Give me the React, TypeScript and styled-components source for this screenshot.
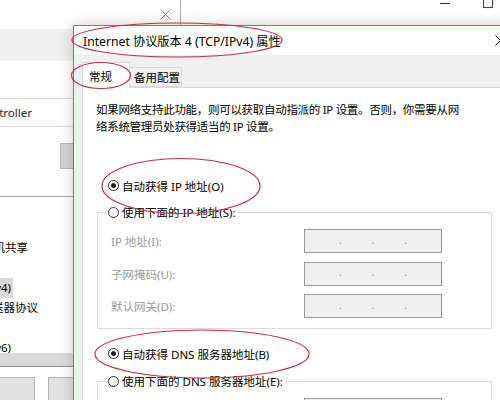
import React from 'react';
import styled, { createGlobalStyle } from 'styled-components';

const GlobalStyle = createGlobalStyle`
  *, *::before, *::after { box-sizing: border-box; }
  html, body { margin: 0; padding: 0; background: #fff; }
  body {
    font-family: "Noto Sans", "Noto Sans CJK SC", sans-serif;
    font-size: 11.5px;
    color: #000;
  }
`;

const Desktop = styled.div`
  position: relative;
  width: 500px;
  height: 400px;
  overflow: hidden;
  background: #fff;
`;

/* window chrome shared bits */

const CaptionButton = styled.div<{ $w: number }>`
  width: ${p => p.$w}px;
  height: 100%;
  display: flex;
  align-items: center;
  justify-content: center;
  flex: none;
`;

const CloseGlyph = ({ color = '#000' }: { color?: string }) => (
  <svg width="11" height="11" viewBox="0 0 11 11">
    <path d="M0.5 0.5 L10.5 10.5 M10.5 0.5 L0.5 10.5" stroke={color} strokeWidth="1" fill="none" />
  </svg>
);

const MinGlyph = () => (
  <svg width="11" height="11" viewBox="0 0 11 11">
    <path d="M0 5.5 H10" stroke="#444" strokeWidth="1.2" />
  </svg>
);

const MaxGlyph = () => (
  <svg width="11" height="11" viewBox="0 0 11 11">
    <rect x="0.5" y="0.5" width="9" height="9" stroke="#444" strokeWidth="1.1" fill="none" />
  </svg>
);

/* network connections window in the back */

const ShellWindow = styled.div`
  position: absolute;
  left: 170px;
  top: -11px;
  width: 383px;
  height: 36px;
  background: #fff;
  z-index: 0;
`;

const ShellBar = styled.div`
  height: 28px;
  display: flex;
  justify-content: flex-end;
`;

/* ethernet properties dialog, mostly covered */

const PropsDialog = styled.div`
  position: absolute;
  left: -1px;
  top: -1px;
  width: 182px;
  height: 440px;
  border: 1px solid #ababab;
  background: #f0f0f0;
  display: flex;
  flex-direction: column;
  z-index: 1;
`;

const PropsTitle = styled.div`
  flex: none;
  height: 29px;
  background: #fff;
  display: flex;
  justify-content: flex-end;
`;

const PropsTabStrip = styled.div`
  flex: none;
  height: 32px;
  background: #f0f0f0;
`;

const PropsPanel = styled.div`
  flex: 1;
  background: #fff;
  display: flex;
  flex-direction: column;
`;

const AdapterBox = styled.div`
  flex: none;
  margin-top: 37px;
  height: 29px;
  border-top: 1px solid #dadada;
  border-bottom: 1px solid #dadada;
  display: flex;
  align-items: center;
  color: #2b2230;
`;

const TrackEnd = styled.div<{ $end: number }>`
  width: ${p => Math.max(p.$end, 0)}px;
  display: flex;
  justify-content: flex-end;
  white-space: nowrap;
  flex: none;
`;

const ConfigRow = styled.div`
  flex: none;
  margin-top: 16px;
  height: 26px;
  padding-left: 60px;
  display: flex;
`;

const GrayButton = styled.div<{ $w: number; $shade?: string }>`
  width: ${p => p.$w}px;
  height: 100%;
  background: ${p => p.$shade ?? '#e1e1e1'};
  border: 1px solid #b4b4b4;
  flex: none;
`;

const ItemList = styled.div`
  flex: none;
  margin-top: 27px;
  border-top: 1px solid #a3a3a3;
  border-bottom: 1px solid #8f8f8f;
  display: flex;
  flex-direction: column;
`;

const ItemViewport = styled.div`
  height: 156px;
  padding-top: 1px;
  overflow: hidden;
`;

const ItemRow = styled.div`
  height: 20px;
  display: flex;
  align-items: center;
`;

const ItemLabel = styled.span<{ $selected?: boolean }>`
  padding: 0 2px;
  line-height: 20px;
  background: ${p => (p.$selected ? '#d9d9d9' : 'transparent')};
`;

const HScroll = styled.div`
  height: 13px;
  background: #dadada;
`;

const ActionRow = styled.div`
  flex: none;
  margin-top: 10px;
  height: 24px;
  display: flex;
  gap: 13px;
  margin-left: -40px;
`;

/* TCP/IPv4 properties dialog */

const Dialog = styled.div`
  position: absolute;
  left: 73px;
  top: 25px;
  width: 451px;
  height: 470px;
  border: 1px solid #3d8bd8;
  background: #f0f0f0;
  box-shadow: 0 0 14px rgba(0, 0, 0, 0.2);
  display: flex;
  flex-direction: column;
  z-index: 2;
`;

const TitleBar = styled.div`
  flex: none;
  height: 29px;
  background: #fff;
  display: flex;
  align-items: center;
  padding-left: 9px;
  font-size: 12.2px;
`;

const TitleText = styled.span`
  flex: 1;
  white-space: nowrap;
`;

const Body = styled.div`
  flex: 1;
  padding: 7px 0 0 8px;
  display: flex;
  flex-direction: column;
`;

const TabRow = styled.div`
  flex: none;
  display: flex;
  align-items: flex-end;
  position: relative;
  z-index: 1;
`;

const Tab = styled.div<{ $active?: boolean; $w: number }>`
  width: ${p => p.$w}px;
  height: ${p => (p.$active ? 26 : 20)}px;
  margin-bottom: ${p => (p.$active ? -1 : 0)}px;
  padding-left: ${p => (p.$active ? 6 : 4)}px;
  background: ${p => (p.$active ? '#fff' : '#f0f0f0')};
  border: 1px solid #d9d9d9;
  border-bottom: ${p => (p.$active ? 'none' : '1px solid #d9d9d9')};
  border-left: ${p => (p.$active ? '1px solid #d9d9d9' : 'none')};
  display: flex;
  align-items: center;
  white-space: nowrap;
`;

const Panel = styled.div`
  flex: 1;
  background: #fff;
  border: 1px solid #d9d9d9;
  padding: 13px 0 0 13px;
  display: flex;
  flex-direction: column;
`;

const Description = styled.p`
  flex: none;
  margin: 0;
  line-height: 17px;
  letter-spacing: -0.3px;
  white-space: nowrap;
`;

const RadioRow = styled.div<{ $gap: number }>`
  flex: none;
  margin-top: ${p => p.$gap}px;
  padding-left: 12px;
  height: 17px;
  display: flex;
`;

const RadioLabel = styled.label`
  display: flex;
  align-items: center;
  gap: 3px;
  white-space: nowrap;
  height: 17px;
`;

const RadioDot = styled.span<{ $checked?: boolean }>`
  width: 11px;
  height: 11px;
  border: 1px solid #333;
  border-radius: 50%;
  background: #fff;
  display: flex;
  align-items: center;
  justify-content: center;
  flex: none;

  &::after {
    content: '';
    width: 5px;
    height: 5px;
    border-radius: 50%;
    background: #222;
    display: ${p => (p.$checked ? 'block' : 'none')};
  }
`;

const GroupBox = styled.fieldset<{ $gap: number }>`
  flex: none;
  margin: ${p => p.$gap}px 0 0 1px;
  width: 395px;
  min-width: 0;
  border: 1px solid #dcdcdc;
  padding: 0 0 9.5px 0;
`;

const GroupLegend = styled.legend`
  margin-left: 10px;
  padding: 0 3px 0 0;
  height: 17px;
`;

const FieldGrid = styled.div`
  padding: 8.5px 0 0 13px;
  display: grid;
  grid-template-columns: 193px 138px;
  row-gap: 8.5px;
  align-items: center;
`;

const FieldLabel = styled.span`
  color: #9b9b9b;
  white-space: nowrap;
`;

const AddressBox = styled.div`
  height: 24px;
  background: #f0f0f0;
  border: 1px solid #9a9a9a;
  padding: 0 4px 3px 4px;
  display: flex;
  justify-content: space-evenly;
  align-items: center;
  color: #8a8a8a;
  font-size: 10px;
`;

const Markup = styled.svg`
  position: absolute;
  left: 0;
  top: 0;
  pointer-events: none;
  z-index: 3;
`;

const Radio = ({ checked, children }: { checked?: boolean; children: React.ReactNode }) => (
  <RadioLabel>
    <RadioDot $checked={checked} />
    <span>{children}</span>
  </RadioLabel>
);

const Address = () => (
  <AddressBox>
    <span>.</span>
    <span>.</span>
    <span>.</span>
  </AddressBox>
);

const components = [
  { text: 'Microsoft 网络客户端', end: 0 },
  { text: 'QoS 数据包计划程序', end: 0 },
  { text: 'Microsoft 网络的文件和打印机共享', end: 30 },
  { text: 'Microsoft LLDP 协议驱动程序', end: 0 },
  { text: 'Internet 协议版本 4 (TCP/IPv4)', end: 13, selected: true },
  { text: 'Microsoft 网络适配器多路传送器协议', end: 40 },
  { text: '链路层拓扑发现响应程序', end: 0 },
  { text: 'Internet 协议版本 6 (TCP/IPv6)', end: 13 },
];

const ipFields = ['IP 地址(I):', '子网掩码(U):', '默认网关(D):'];
const dnsFields = ['首选 DNS 服务器(P):', '备用 DNS 服务器(A):'];

// hand-drawn style callouts around the settings
const circles = [
  { cx: 177, cy: 40, rx: 105, ry: 17 },
  { cx: 101, cy: 75.5, rx: 29.5, ry: 13 },
  { cx: 181, cy: 186, rx: 79, ry: 27.5 },
  { cx: 202, cy: 354, rx: 107, ry: 24 },
];

export default function App() {
  return (
    <>
      <GlobalStyle />
      <Desktop>
        <ShellWindow>
          <ShellBar>
            <CaptionButton $w={43}><MinGlyph /></CaptionButton>
            <CaptionButton $w={43}><MaxGlyph /></CaptionButton>
            <CaptionButton $w={43}><CloseGlyph color="#444" /></CaptionButton>
          </ShellBar>
        </ShellWindow>

        <PropsDialog>
          <PropsTitle>
            <CaptionButton $w={30}><CloseGlyph color="#888" /></CaptionButton>
          </PropsTitle>
          <PropsTabStrip />
          <PropsPanel>
            <AdapterBox>
              <TrackEnd $end={32}>Realtek PCIe GbE Family Controller</TrackEnd>
            </AdapterBox>
            <ConfigRow>
              <GrayButton $w={100} $shade="#d4d4d4" />
            </ConfigRow>
            <ItemList>
              <ItemViewport>
                {components.map(c => (
                  <ItemRow key={c.text}>
                    <TrackEnd $end={c.end}>
                      <ItemLabel $selected={c.selected}>{c.text}</ItemLabel>
                    </TrackEnd>
                  </ItemRow>
                ))}
              </ItemViewport>
              <HScroll />
            </ItemList>
            <ActionRow>
              <GrayButton $w={75} />
              <GrayButton $w={75} />
            </ActionRow>
          </PropsPanel>
        </PropsDialog>

        <Dialog>
          <TitleBar>
            <TitleText>Internet 协议版本 4 (TCP/IPv4) 属性</TitleText>
            <CaptionButton $w={46}><CloseGlyph /></CaptionButton>
          </TitleBar>
          <Body>
            <TabRow>
              <Tab $active $w={48}>常规</Tab>
              <Tab $w={52}>备用配置</Tab>
            </TabRow>
            <Panel>
              <Description>
                如果网络支持此功能，则可以获取自动指派的 IP 设置。否则，你需要从网
                <br />
                络系统管理员处获得适当的 IP 设置。
              </Description>

              <RadioRow $gap={42}>
                <Radio checked>自动获得 IP 地址(O)</Radio>
              </RadioRow>
              <GroupBox $gap={9.5}>
                <GroupLegend>
                  <Radio>使用下面的 IP 地址(S):</Radio>
                </GroupLegend>
                <FieldGrid>
                  {ipFields.map(f => (
                    <React.Fragment key={f}>
                      <FieldLabel>{f}</FieldLabel>
                      <Address />
                    </React.Fragment>
                  ))}
                </FieldGrid>
              </GroupBox>

              <RadioRow $gap={16.5}>
                <Radio checked>自动获得 DNS 服务器地址(B)</Radio>
              </RadioRow>
              <GroupBox $gap={10.5}>
                <GroupLegend>
                  <Radio>使用下面的 DNS 服务器地址(E):</Radio>
                </GroupLegend>
                <FieldGrid>
                  {dnsFields.map(f => (
                    <React.Fragment key={f}>
                      <FieldLabel>{f}</FieldLabel>
                      <Address />
                    </React.Fragment>
                  ))}
                </FieldGrid>
              </GroupBox>
            </Panel>
          </Body>
        </Dialog>

        <Markup width="500" height="400" viewBox="0 0 500 400">
          {circles.map((c, i) => (
            <ellipse key={i} {...c} fill="none" stroke="#c42d40" strokeWidth="1.2" />
          ))}
        </Markup>
      </Desktop>
    </>
  );
}
